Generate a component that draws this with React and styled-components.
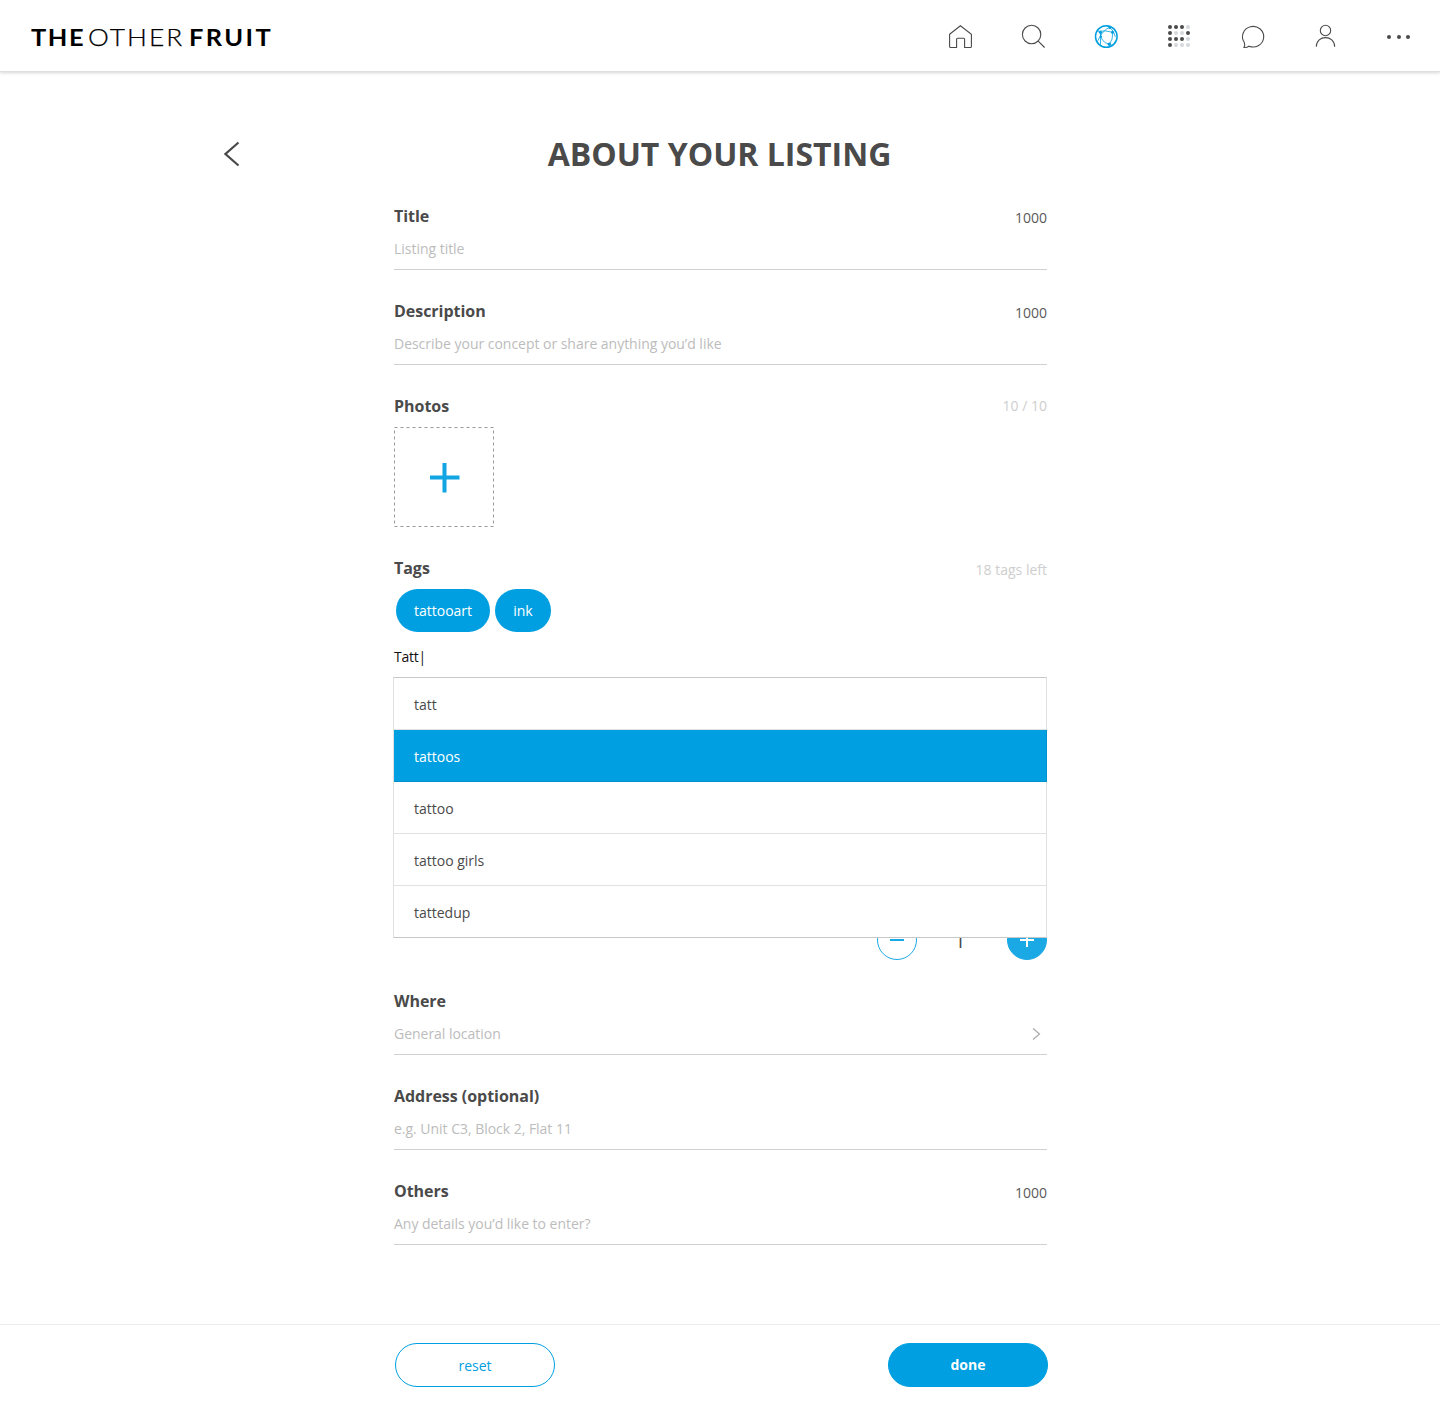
import React from "react";
import styled, { createGlobalStyle, css } from "styled-components";

const BLUE = "#009fe1";
const INK = "#4a4a4a";

const GlobalStyle = createGlobalStyle`
  *, *::before, *::after { box-sizing: border-box; }
  body { margin: 0; background: #fff; color: ${INK}; font-family: "Open Sans", "Noto Sans", sans-serif; font-size: 14px; }
  button { font: inherit; cursor: pointer; }
`;

const Page = styled.div`
  display: flex;
  flex-direction: column;
  min-height: 1404px;
`;

const Header = styled.header`
  height: 72px;
  display: flex;
  align-items: center;
  justify-content: space-between;
  padding: 0 28px 0 31px;
  border-bottom: 1px solid #dedede;
  box-shadow: 0 1px 3px rgba(0, 0, 0, 0.16);
`;

const Logo = styled.div`
  display: flex;
  color: #000;
  font-family: Lato, sans-serif;
  font-size: 23.5px;
  line-height: 30px;
  padding-top: 2px;
`;

const LogoPart = styled.span`
  width: ${(p) => p.$width}px;
  font-weight: ${(p) => (p.$bold ? 700 : 300)};
  letter-spacing: ${(p) => p.$spacing}px;
  white-space: nowrap;
  transform: scaleX(${(p) => p.$stretch});
  transform-origin: left center;
  ${(p) => !p.$bold && css`-webkit-text-stroke: 0.25px #000;`}
`;

const Nav = styled.nav`
  display: flex;
  gap: 45px;
  padding-top: 3px;
`;

const NavIcon = styled.svg`
  display: block;
  width: 28px;
  height: 28px;
  fill: none;
  stroke: ${(p) => (p.$active ? BLUE : INK)};
  stroke-width: 1.1;
`;

const Main = styled.main`
  flex: 1;
`;

const Heading = styled.div`
  display: grid;
  grid-template-columns: 16px 1fr 18px;
  align-items: center;
  height: 103px;
  padding: 61px 223px 0 224px;
`;

const BackIcon = styled.svg`
  width: 16px;
  height: 26px;
  margin-bottom: 1px;
  fill: none;
  stroke: ${INK};
  stroke-width: 2.2;
`;

const Title = styled.h1`
  margin: 0;
  font-size: 32px;
  line-height: 42px;
  font-weight: 700;
  text-align: center;
`;

const Form = styled.form`
  width: 653px;
  margin-left: 394px;
`;

const FieldBox = styled.section`
  position: relative;
  padding-top: 30px;
  ${(p) => p.$line && css`border-bottom: 1px solid #d0d0d0;`}
`;

const LabelRow = styled.div`
  display: flex;
  justify-content: space-between;
  height: 22px;
  line-height: 22px;
`;

const Label = styled.label`
  font-size: 16px;
  font-weight: 700;
  letter-spacing: -0.03px;
`;

const Counter = styled.span`
  color: ${(p) => (p.$muted ? "#cecece" : "#5a5a5a")};
  padding-top: ${(p) => p.$drop ?? 2}px;
`;

const Placeholder = styled.div`
  display: flex;
  align-items: center;
  justify-content: space-between;
  height: 42px;
  padding: 0 6px 0 0;
  color: #bcbcbc;
  letter-spacing: -0.025px;
`;

const Chevron = styled.svg`
  width: 9px;
  height: 14px;
  margin-top: 2px;
  fill: none;
  stroke: #aaa;
  stroke-width: 1.2;
`;

const PhotoTile = styled.button`
  display: flex;
  align-items: center;
  justify-content: center;
  width: 100px;
  height: 100px;
  margin-top: 10px;
  padding: 0;
  background: none;
  border: 0;
`;

const Chips = styled.div`
  display: flex;
  gap: 5px;
  padding: 10px 0 0 2px;
`;

const Chip = styled.span`
  width: ${(p) => p.$width}px;
  height: 43px;
  border-radius: 22px;
  background: ${BLUE};
  color: #fff;
  line-height: 44px;
  text-align: center;
`;

const TagInput = styled.div`
  height: 45px;
  padding-top: 5px;
  line-height: 40px;
  color: #111;
  letter-spacing: -0.25px;
`;

const Suggestions = styled.ul`
  position: absolute;
  z-index: 2;
  top: 100%;
  left: -1px;
  width: 654px;
  margin: 0;
  padding: 0;
  list-style: none;
  background: #fff;
  border: 1px solid #e0e0e0;
  border-top-color: #c8c8c8;
  border-bottom-color: #c8c8c8;
`;

const Suggestion = styled.li`
  height: 52px;
  padding-left: 20px;
  line-height: 54px;
  border-bottom: 1px solid #e2e2e2;
  &:last-child { height: 51px; border-bottom: 0; }
  ${(p) => p.$active && css`
    && { background: ${BLUE}; color: #fff; border-bottom-color: #0090cc; margin-right: -1px; border-right: 1px solid #0090cc; }
  `}
`;

const Quantity = styled.section`
  display: flex;
  align-items: flex-end;
  justify-content: flex-end;
  height: 283px;
`;

const StepButton = styled.button`
  display: flex;
  align-items: center;
  justify-content: center;
  width: 40px;
  height: 40px;
  padding: 0;
  border-radius: 50%;
  border: 1px solid #1aa9e5;
  background: ${(p) => (p.$filled ? "#1aa9e5" : "#fff")};
  color: ${(p) => (p.$filled ? "#fff" : "#1aa9e5")};
`;

const StepValue = styled.span`
  width: 90px;
  padding-right: 4px;
  line-height: 38px;
  font-size: 20px;
  text-align: center;
`;

const Footer = styled.footer`
  height: 80px;
  display: flex;
  justify-content: space-between;
  padding: 18px 392px 0 395px;
  border-top: 1px solid #ececec;
`;

const Action = styled.button`
  width: 160px;
  height: 44px;
  padding: ${(p) => (p.$primary ? "0 0 2px" : "0")};
  border: 1px solid ${BLUE};
  border-radius: 22px;
  background: ${(p) => (p.$primary ? BLUE : "#fff")};
  color: ${(p) => (p.$primary ? "#fff" : BLUE)};
  font-weight: ${(p) => (p.$primary ? 700 : 400)};
`;

const gridPattern = ["1110", "1001", "1110", "1000"];

function Field({ label, counter, hint, arrow }) {
  return (
    <FieldBox $line>
      <LabelRow>
        <Label>{label}</Label>
        {counter && <Counter>{counter}</Counter>}
      </LabelRow>
      <Placeholder>
        {hint}
        {arrow && (
          <Chevron viewBox="0 0 9 14"><path d="M1 1.5 7.5 7 1 12.5" /></Chevron>
        )}
      </Placeholder>
    </FieldBox>
  );
}

function Icons() {
  return (
    <Nav>
      <NavIcon viewBox="0 0 28 28">
        <path d="M3.6 11.2 14.4 2.8 25.4 11.2V23.4Q25.4 24.5 24.4 24.5H18.6V16.2Q18.6 15.2 17.6 15.2H11.6Q10.6 15.2 10.6 16.2V24.5H4.6Q3.6 24.5 3.6 23.4Z" />
      </NavIcon>
      <NavIcon viewBox="0 0 28 28">
        <circle cx="12.6" cy="11.5" r="9.2" /><path d="m19.2 18.1 6.4 6.4" />
      </NavIcon>
      <NavIcon viewBox="0 0 28 28" $active>
        <circle cx="14.3" cy="13.5" r="10.8" strokeWidth="1.5" />
        <path d="M5.8 8.3Q13 7 20.8 9.3Q21 17 17.3 21.3Q8.8 19 8.5 10.8M8.5 9.3V21.8M5.8 17.8Q9.8 7.8 18.3 3.8M14.3 2.8Q21 5 23.3 13.8" strokeWidth=".8" />
        <g fill={BLUE} stroke="none"><circle cx="8.5" cy="9.3" r="1.6" /><circle cx="20.5" cy="9.3" r="1.5" /><circle cx="17.8" cy="4.8" r="1.2" /><circle cx="17.4" cy="21.3" r="1.7" /><circle cx="9.1" cy="13.8" r="1" /></g>
      </NavIcon>
      <NavIcon viewBox="0 0 28 28">
        {gridPattern.flatMap((row, y) => [...row].map((on, x) => (
          <circle key={`${x}-${y}`} cx={5 + x * 6} cy={4 + y * 6} r="2" stroke="none" fill={on === "1" ? INK : "#d5d8dc"} />
        )))}
      </NavIcon>
      <NavIcon viewBox="0 0 28 28">
        <path d="M6 24.5Q7.2 21.4 6.2 19.3A10.6 10.3 0 1 1 11 23.2Q9 24.7 6 24.5Z" />
      </NavIcon>
      <NavIcon viewBox="0 0 28 28">
        <circle cx="14.5" cy="7.5" r="5.2" /><path d="M5.3 23.7C5.5 11.6 23.5 11.6 23.7 23.7" />
      </NavIcon>
      <NavIcon viewBox="0 0 28 28">
        <g fill={INK} stroke="none"><circle cx="5" cy="14" r="2" /><circle cx="15" cy="14" r="2" /><circle cx="24" cy="14" r="2" /></g>
      </NavIcon>
    </Nav>
  );
}

export default function App() {
  return (
    <Page>
      <GlobalStyle />
      <Header>
        <Logo>
          <LogoPart $bold $width={57} $spacing={1.5} $stretch={1.08}>THE</LogoPart>
          <LogoPart $width={101} $spacing={1.8} $stretch={1.12}>OTHER</LogoPart>
          <LogoPart $bold $width={84} $spacing={2.2} $stretch={1.08}>FRUIT</LogoPart>
        </Logo>
        <Icons />
      </Header>
      <Main>
        <Heading>
          <BackIcon viewBox="0 0 16 26"><path d="M14.5 1.5 1.5 13 14.5 24.5" /></BackIcon>
          <Title>ABOUT YOUR LISTING</Title>
        </Heading>
        <Form>
          <Field label="Title" counter="1000" hint="Listing title" />
          <Field label="Description" counter="1000" hint="Describe your concept or share anything you’d like" />
          <FieldBox>
            <LabelRow><Label>Photos</Label><Counter $muted $drop={0}>10 / 10</Counter></LabelRow>
            <PhotoTile type="button" aria-label="Add photo">
              <svg width="100" height="100" fill="none">
                <rect x=".5" y=".5" width="99" height="99" stroke="#999" strokeDasharray="3 3" />
                <path d="M36 50.5H65.5M50.5 36V65.5" stroke="#12a5e3" strokeWidth="4" />
              </svg>
            </PhotoTile>
          </FieldBox>
          <FieldBox>
            <LabelRow><Label>Tags</Label><Counter $muted>18 tags left</Counter></LabelRow>
            <Chips><Chip $width={94}>tattooart</Chip><Chip $width={56}>ink</Chip></Chips>
            <TagInput>Tatt|</TagInput>
            <Suggestions>
              <Suggestion>tatt</Suggestion>
              <Suggestion $active>tattoos</Suggestion>
              <Suggestion>tattoo</Suggestion>
              <Suggestion>tattoo girls</Suggestion>
              <Suggestion>tattedup</Suggestion>
            </Suggestions>
          </FieldBox>
          <Quantity>
            <StepButton type="button" aria-label="Decrease">
              <svg width="14" height="14" stroke="currentColor" strokeWidth="2"><path d="M0 7H14" /></svg>
            </StepButton>
            <StepValue>1</StepValue>
            <StepButton type="button" aria-label="Increase" $filled>
              <svg width="14" height="14" stroke="currentColor" strokeWidth="2"><path d="M0 7H14M7 0V14" /></svg>
            </StepButton>
          </Quantity>
          <Field label="Where" hint="General location" arrow />
          <Field label="Address (optional)" hint="e.g. Unit C3, Block 2, Flat 11" />
          <Field label="Others" counter="1000" hint="Any details you’d like to enter?" />
        </Form>
      </Main>
      <Footer>
        <Action type="button">reset</Action>
        <Action type="button" $primary>done</Action>
      </Footer>
    </Page>
  );
}
